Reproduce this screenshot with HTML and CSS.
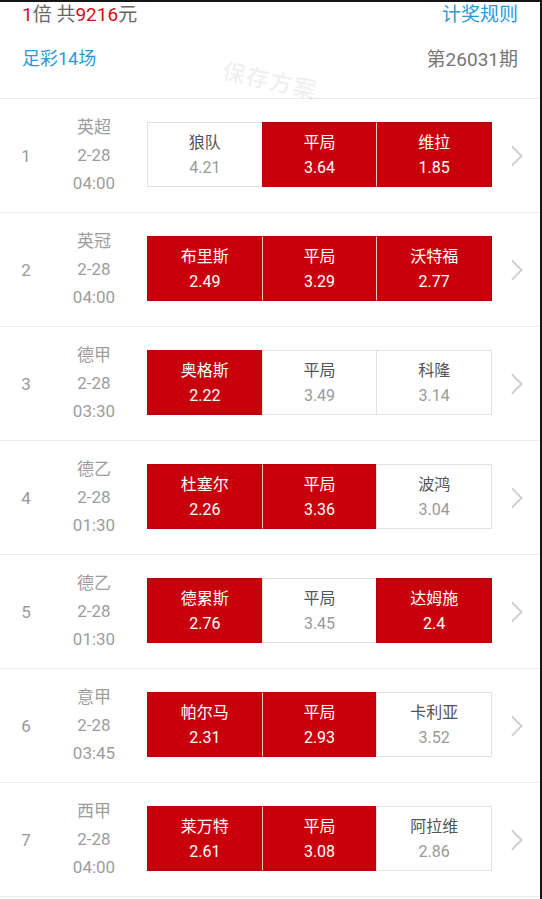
FILE: index.html
```html
<!DOCTYPE html>
<html lang="zh-CN">
<head>
    <meta charset="UTF-8">
    <meta name="viewport" content="width=device-width, initial-scale=1.0">
    <title>足彩14场</title>
    <link rel="stylesheet" href="styles.css">
</head>
<body>
    <div class="page">
        <div class="watermark wm-main">保存方案</div>

        <div class="header">
            <div class="header-row first">
                <span class="summary"><em>1</em>倍 共<em>9216</em>元</span>
                <a class="link">计奖规则</a>
            </div>
            <div class="header-row second">
                <span class="game">足彩14场</span>
                <span class="issue">第26031期</span>
            </div>
        </div>

        <div class="match">
            <div class="num">1</div>
            <div class="info"><div>英超</div><div>2-28</div><div>04:00</div></div>
            <div class="odds">
                <div class="cell"><div class="name">狼队</div><div class="val">4.21</div></div>
                <div class="cell on"><div class="name">平局</div><div class="val">3.64</div></div>
                <div class="cell on"><div class="name">维拉</div><div class="val">1.85</div></div>
            </div>
            <div class="more"><svg width="13" height="22" viewBox="0 0 13 22"><polyline points="2,1.5 11.5,11 2,20.5" /></svg></div>
        </div>

        <div class="match">
            <div class="num">2</div>
            <div class="info"><div>英冠</div><div>2-28</div><div>04:00</div></div>
            <div class="odds">
                <div class="cell on"><div class="name">布里斯</div><div class="val">2.49</div></div>
                <div class="cell on"><div class="name">平局</div><div class="val">3.29</div></div>
                <div class="cell on"><div class="name">沃特福</div><div class="val">2.77</div></div>
            </div>
            <div class="more"><svg width="13" height="22" viewBox="0 0 13 22"><polyline points="2,1.5 11.5,11 2,20.5" /></svg></div>
        </div>

        <div class="match">
            <div class="num">3</div>
            <div class="info"><div>德甲</div><div>2-28</div><div>03:30</div></div>
            <div class="odds">
                <div class="cell on"><div class="name">奥格斯</div><div class="val">2.22</div></div>
                <div class="cell"><div class="name">平局</div><div class="val">3.49</div></div>
                <div class="cell"><div class="name">科隆</div><div class="val">3.14</div></div>
            </div>
            <div class="more"><svg width="13" height="22" viewBox="0 0 13 22"><polyline points="2,1.5 11.5,11 2,20.5" /></svg></div>
        </div>

        <div class="match">
            <div class="num">4</div>
            <div class="info"><div>德乙</div><div>2-28</div><div>01:30</div></div>
            <div class="odds">
                <div class="cell on"><div class="name">杜塞尔</div><div class="val">2.26</div></div>
                <div class="cell on"><div class="name">平局</div><div class="val">3.36</div></div>
                <div class="cell"><div class="name">波鸿</div><div class="val">3.04</div></div>
            </div>
            <div class="more"><svg width="13" height="22" viewBox="0 0 13 22"><polyline points="2,1.5 11.5,11 2,20.5" /></svg></div>
        </div>

        <div class="match">
            <div class="num">5</div>
            <div class="info"><div>德乙</div><div>2-28</div><div>01:30</div></div>
            <div class="odds">
                <div class="cell on"><div class="name">德累斯</div><div class="val">2.76</div></div>
                <div class="cell"><div class="name">平局</div><div class="val">3.45</div></div>
                <div class="cell on"><div class="name">达姆施</div><div class="val">2.4</div></div>
            </div>
            <div class="more"><svg width="13" height="22" viewBox="0 0 13 22"><polyline points="2,1.5 11.5,11 2,20.5" /></svg></div>
        </div>

        <div class="match">
            <div class="num">6</div>
            <div class="info"><div>意甲</div><div>2-28</div><div>03:45</div></div>
            <div class="odds">
                <div class="cell on"><div class="name">帕尔马</div><div class="val">2.31</div></div>
                <div class="cell on"><div class="name">平局</div><div class="val">2.93</div></div>
                <div class="cell"><div class="name">卡利亚</div><div class="val">3.52</div></div>
            </div>
            <div class="more"><svg width="13" height="22" viewBox="0 0 13 22"><polyline points="2,1.5 11.5,11 2,20.5" /></svg></div>
        </div>

        <div class="match">
            <div class="num">7</div>
            <div class="info"><div>西甲</div><div>2-28</div><div>04:00</div></div>
            <div class="odds">
                <div class="cell on"><div class="name">莱万特</div><div class="val">2.61</div></div>
                <div class="cell on"><div class="name">平局</div><div class="val">3.08</div></div>
                <div class="cell"><div class="name">阿拉维</div><div class="val">2.86</div></div>
            </div>
            <div class="more"><svg width="13" height="22" viewBox="0 0 13 22"><polyline points="2,1.5 11.5,11 2,20.5" /></svg></div>
        </div>
    </div>
</body>
</html>
```

FILE: styles.css
```css
html, body {
    margin: 0;
    padding: 0;
    background-color: #161616;
}
body {
    font-family: Roboto, "Noto Sans CJK SC", sans-serif;
    color: #666;
}
.page {
    position: relative;
    width: 540px;
    margin-top: 2px;
    height: 897px;
    background: #fff;
    overflow: hidden;
}
.watermark {
    position: absolute;
    font-size: 23px;
    font-weight: bold;
    letter-spacing: 1px;
    color: rgba(0, 0, 0, 0.06);
    transform: rotate(12deg);
    white-space: nowrap;
}
.wm-main {
    left: 222px;
    top: 60px;
}
.header {
    padding: 0 22px 29px;
    border-bottom: 1px solid #ebebeb;
}
.header-row {
    display: flex;
    justify-content: space-between;
    align-items: center;
    font-size: 19px;
}
.header-row.first {
    height: 22px;
    margin-top: -1px;
}
.header-row.second {
    height: 24px;
    margin-top: 22px;
}
.summary {
    color: #666;
}
.summary em {
    font-style: normal;
    color: #d0101b;
}
.link, .game {
    color: #2a9ad6;
}
.game {
    font-size: 18px;
}
.issue {
    color: #777;
}
.match {
    display: flex;
    align-items: center;
    height: 113px;
    border-bottom: 1px solid #ebebeb;
}
.num {
    width: 52px;
    text-align: center;
    font-size: 17px;
    color: #999;
}
.info {
    width: 84px;
    margin-right: 11px;
    margin-top: -2px;
    text-align: center;
    font-size: 17px;
    line-height: 28px;
    color: #9d9d9d;
}
.odds {
    display: flex;
    width: 345px;
    margin-top: -2px;
}
.cell {
    flex: 1;
    height: 63px;
    margin-left: -1px;
    border: 1px solid #e2e2e2;
    display: flex;
    flex-direction: column;
    justify-content: center;
    text-align: center;
    font-size: 16px;
    line-height: 25px;
    background: #fff;
}
.cell:first-child {
    margin-left: 0;
}
.cell .name {
    color: #555;
}
.cell .val {
    color: #999;
}
.cell.on {
    background: #c8000b;
    border-color: #b3000a;
}
.cell.on + .cell.on {
    border-left-color: #f0c8c8;
}
.cell.on .name, .cell.on .val {
    color: #fff;
}
.more {
    flex: 1;
    display: flex;
    justify-content: center;
    align-items: center;
}
.more polyline {
    fill: none;
    stroke: #cfcfcf;
    stroke-width: 2;
}
```
